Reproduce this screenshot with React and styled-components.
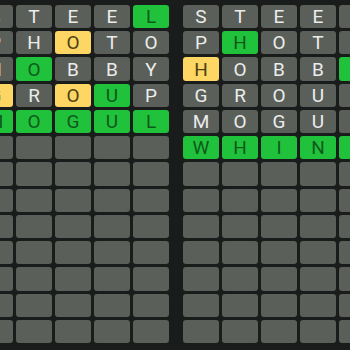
import React from "react";
import styled, { createGlobalStyle } from "styled-components";

const GlobalStyle = createGlobalStyle`
  html, body {
    margin: 0;
    padding: 0;
    background: #1a1c1c;
    overflow: hidden;
  }
`;

const Page = styled.div`
  width: 350px;
  height: 350px;
  display: flex;
  gap: 14px;
  margin-left: -23px;
  padding-top: 5px;
  box-sizing: border-box;
  font-family: Roboto, "Liberation Sans", sans-serif;
`;

const Board = styled.div`
  flex: none;
  width: 192px;
  height: 338px;
  display: grid;
  grid-template-columns: repeat(5, 1fr);
  grid-template-rows: repeat(13, 1fr);
  gap: 3px;
`;

const colors = {
  empty: { bg: "#5a5f5a", fg: "#ececec" },
  miss: { bg: "#5a5f5a", fg: "#ececec" },
  hit: { bg: "#20c23c", fg: "#0e5a1b" },
  near: { bg: "#fdd663", fg: "#4d4014" },
};

const Tile = styled.div`
  background: ${(p) => colors[p.$state].bg};
  color: ${(p) => colors[p.$state].fg};
  border-radius: 3px;
  display: flex;
  align-items: center;
  justify-content: center;
  font-size: 19px;
  font-weight: 400;
  line-height: 1;
`;

// g = green, y = yellow, . = grey
const left = [
  ["STEEL", "....g"],
  ["PHOTO", "..y.."],
  ["HOBBY", ".g..."],
  ["GROUP", "y.yg."],
  ["MOGUL", "ggggg"],
];

const right = [
  ["STEEL", "....."],
  ["PHOTO", ".g..."],
  ["HOBBY", "y...g"],
  ["GROUP", "....."],
  ["MOGUL", "....."],
  ["WHINY", "ggggg"],
];

const stateOf = { g: "hit", y: "near", ".": "miss" };

const Grid = ({ guesses }) => {
  const tiles = [];
  for (let r = 0; r < 13; r++) {
    for (let c = 0; c < 5; c++) {
      const g = guesses[r];
      if (g) {
        tiles.push(
          <Tile key={r + "-" + c} $state={stateOf[g[1][c]]}>
            {g[0][c]}
          </Tile>
        );
      } else {
        tiles.push(<Tile key={r + "-" + c} $state="empty" />);
      }
    }
  }
  return <Board>{tiles}</Board>;
};

const App = () => {
  return (
    <>
      <GlobalStyle />
      <Page>
        <Grid guesses={left} />
        <Grid guesses={right} />
      </Page>
    </>
  );
};

export default App;
